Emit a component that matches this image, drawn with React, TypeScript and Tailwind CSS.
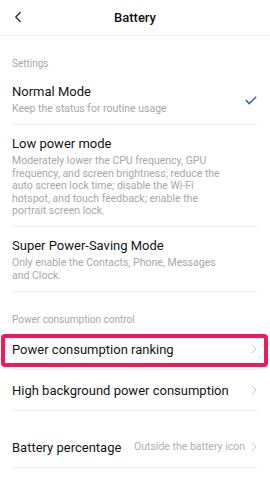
import { ChevronLeft } from "lucide-react"

const font = { fontFamily: "Roboto, 'Noto Sans', sans-serif" }

function Chevron() {
  return (
    <svg width="6" height="10" viewBox="0 0 6 10" className="shrink-0">
      <path d="M0.8 0.8 L5 5 L0.8 9.2" fill="none" stroke="#c9c9c9" strokeWidth="1" />
    </svg>
  )
}

function SectionLabel({ children }: { children: React.ReactNode }) {
  return <div className="px-3 pt-[22px] text-[10px] leading-[12px] text-[#a8a8a8]">{children}</div>
}

function ModeRow({ title, lines, checked }: { title: string; lines: string[]; checked?: boolean }) {
  return (
    <div className="mx-3 flex items-center justify-between border-b border-[#f1f1f1] pt-[11px] pb-[9px]">
      <div>
        <div className="text-[13px] leading-[16px] text-[#151515]">{title}</div>
        <div className="mt-[3px] text-[10.5px] leading-[12.4px] text-[#a8a8a8]">
          {lines.map((l) => (
            <div key={l}>{l}</div>
          ))}
        </div>
      </div>
      {checked && (
        <svg width="12" height="9" viewBox="0 0 12 9" className="mr-[1px] mt-[2px]">
          <path d="M0.8 4 L4.2 7.6 L11.2 0.8" fill="none" stroke="#3b5dc2" strokeWidth="1.5" />
        </svg>
      )}
    </div>
  )
}

function LinkRow({ title, value }: { title: string; value?: string }) {
  return (
    <div className="mx-3 flex h-[41px] items-center justify-between border-b border-[#f1f1f1]">
      <div className="text-[13px] text-[#151515]">{title}</div>
      <div className="flex items-center gap-[6px] pr-[1px]">
        {value && <span className="text-[10.5px] text-[#b0b0b0]">{value}</span>}
        <Chevron />
      </div>
    </div>
  )
}

export default function App() {
  return (
    <div className="h-[478px] w-[270px] overflow-hidden bg-white" style={font}>
      <div className="relative flex h-[36px] items-center justify-center border-b border-[#f3f3f3]">
        <ChevronLeft className="absolute left-[9px] top-[8px] h-[18px] w-[18px] text-[#222]" strokeWidth={1.6} />
        <div className="text-[13px] font-medium text-[#111]">Battery</div>
      </div>

      <SectionLabel>Settings</SectionLabel>
      <div className="pt-[3px]">
        <ModeRow title="Normal Mode" lines={["Keep the status for routine usage"]} checked />
      </div>
      <ModeRow
        title="Low power mode"
        lines={[
          "Moderately lower the CPU frequency, GPU",
          "frequency, and screen brightness; reduce the",
          "auto screen lock time; disable the Wi-Fi",
          "hotspot, and touch feedback; enable the",
          "portrait screen lock.",
        ]}
      />
      <ModeRow title="Super Power-Saving Mode" lines={["Only enable the Contacts, Phone, Messages", "and Clock."]} />

      <SectionLabel>Power consumption control</SectionLabel>
      <div className="relative mt-[3px]">
        <LinkRow title="Power consumption ranking" />
        <div className="absolute top-[5px] right-[2px] bottom-[3px] left-[1px] rounded-[4px] border-4 border-[#f2185c]" />
      </div>
      <LinkRow title="High background power consumption" />

      <div className="h-[16px]" />
      <LinkRow title="Battery percentage" value="Outside the battery icon" />
    </div>
  )
}
